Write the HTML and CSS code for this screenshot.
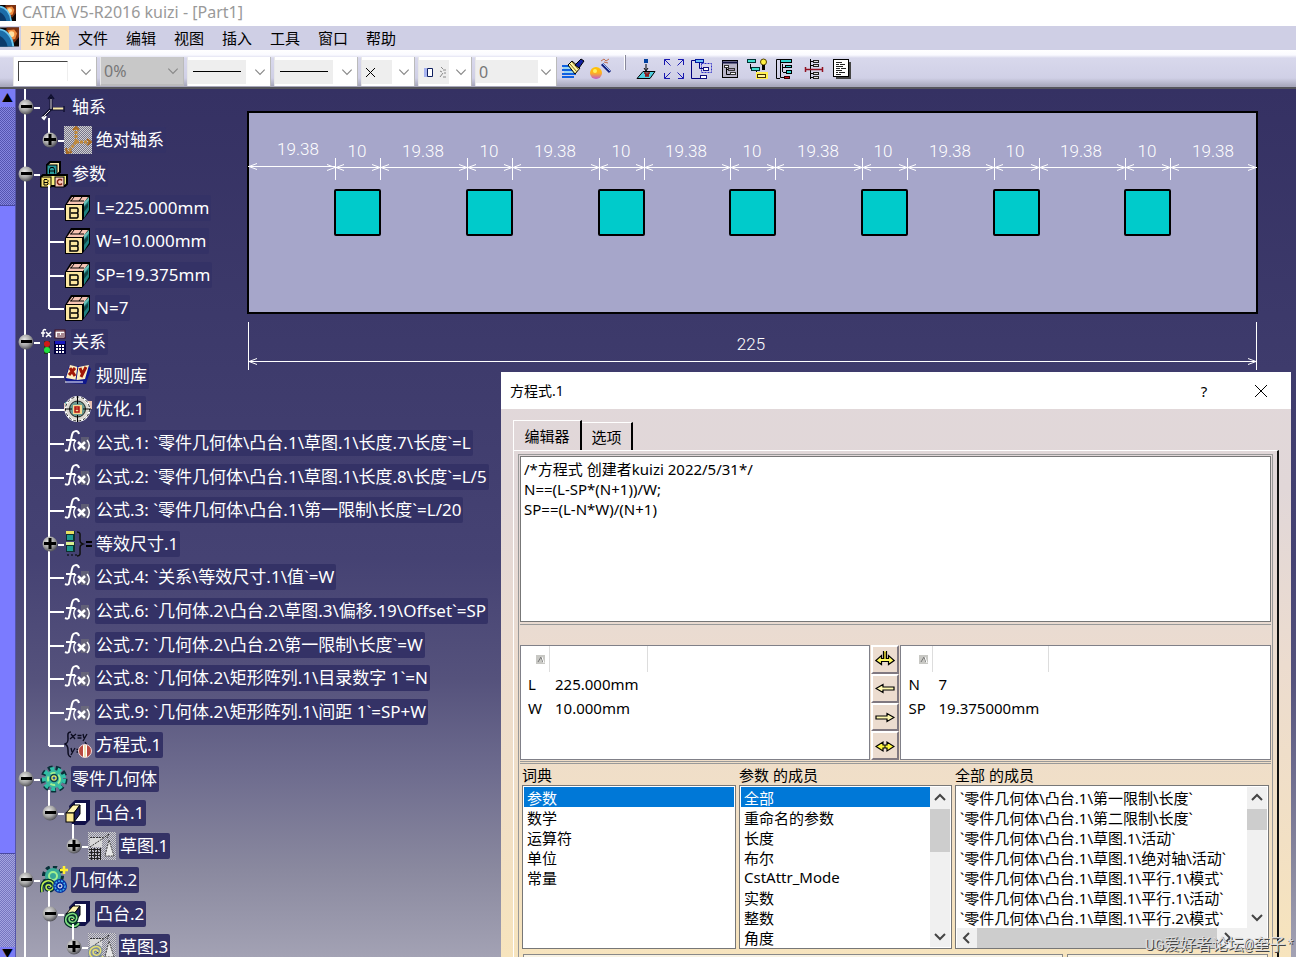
FILE: index.html
```html
<!DOCTYPE html>
<html lang="zh-CN">
<head>
<meta charset="utf-8">
<title>CATIA V5-R2016 kuizi - [Part1]</title>
<link rel="stylesheet" href="styles.css">
</head>
<body>
<svg class="defs" aria-hidden="true">
  <defs>
    <radialGradient id="ball" cx="40%" cy="35%" r="65%"><stop offset="0" stop-color="#e8e8e8"/><stop offset=".6" stop-color="#a4a4a4"/><stop offset="1" stop-color="#55555c"/></radialGradient>
    <pattern id="dither" width="2" height="2" patternUnits="userSpaceOnUse"><rect width="1" height="1" fill="#d0d0d0"/><rect x="1" y="1" width="1" height="1" fill="#d0d0d0"/></pattern>
    <linearGradient id="orb" x1="0" y1="0" x2="0" y2="1"><stop offset="0" stop-color="#ffc400"/><stop offset=".5" stop-color="#ffb020"/><stop offset="1" stop-color="#c05ad0"/></linearGradient>
  </defs>
  <symbol id="minus" viewBox="0 0 16 16"><circle cx="8" cy="8" r="7.5" fill="url(#ball)"/><path d="M3 7.5h11" stroke="#000" stroke-width="3"/></symbol>
  <symbol id="plus" viewBox="0 0 16 16"><circle cx="8" cy="8" r="7.5" fill="url(#ball)"/><path d="M2 7.5h12M8 2v11" stroke="#000" stroke-width="3"/></symbol>
  <symbol id="app" viewBox="0 0 20 20"><rect width="20" height="20" fill="#0a0505"/><path d="M7 0h13v10l-5 6-9-9z" fill="#7a3010"/><path d="M8 3l7-1 3 4-2 6-4 1z" fill="#f08a3c"/><circle cx="12" cy="7" r="3" fill="#ffe0a0"/><path d="M0 2c7 1 13 8 14 18H0z" fill="#1c6ca8"/><path d="M0 2c7 1 13 8 14 18" fill="none" stroke="#6cc8f0" stroke-width="2"/><path d="M0 9c4 2 7 6 8 11H0z" fill="#0c3a6a"/></symbol>
  <symbol id="axis" viewBox="0 0 28 28"><path d="M11 16V4M11 16h12M11 16l-8 8" stroke="#10102c" stroke-width="3" fill="none"/><path d="M13 15.500h11" stroke="#f8e8a8" stroke-width="2"/><path d="M11 16V6M10 17l-7 7" stroke="#e0d8e0" fill="none"/><path d="M8 6l3-4 3 4M24 13v6" stroke="#101030" stroke-width="1.500" fill="none"/><path d="M2 24l2 2 2-3" stroke="#fff" stroke-width="2" fill="none"/></symbol>
  <symbol id="axisdim" viewBox="0 0 28 28"><rect width="28" height="28" fill="#77758c"/><rect width="28" height="28" fill="url(#dither)"/><path d="M12 16V2M12 16h13M12 16L4 26" stroke="#c08a3c" stroke-width="3" fill="none" stroke-dasharray="3 1"/><path d="M9 4l3-3 3 3M23 13l4 3-4 3M2 22l1 5 5-1" stroke="#a86a20" stroke-width="2" fill="none"/></symbol>
  <symbol id="abc" viewBox="0 0 28 28"><path d="M7 5l3-3h10v10l-2 2H7z" fill="#f8e8a8" stroke="#000" stroke-width="2"/><rect x="7" y="5" width="10" height="10" fill="#2a9a9a" stroke="#000"/><path d="M9.500 13.500v-4l1-2h3l1 2v4M9.500 11h5" fill="none" stroke="#000"/><path d="M1 17l2-2h24v9l-2 2H1z" fill="#f8f080" stroke="#000" stroke-width="2"/><rect x="1" y="17" width="10" height="10" fill="#f8e070" stroke="#000"/><rect x="15" y="17" width="9" height="10" fill="#f8c8b8" stroke="#000"/><path d="M4 19.500h3l1 1v1l-1 1H4M7 22l1 1v1l-1 1H4v-5" fill="none" stroke="#000"/><path d="M22 20.500l-1-1h-2l-1.500 1.500v2l1.500 1.500h2l1-1" fill="none" stroke="#802010" stroke-width="1.500"/></symbol>
  <symbol id="cube" viewBox="0 0 28 28"><path d="M1 11L7 1h19v16l-8 10H1z" fill="#000"/><path d="M3 10l5-7h16l-5 7z" fill="#f6c4b4"/><path d="M6 7h14M10 3l-3 4M18 3l-3 4" stroke="#000"/><path d="M20 10l5-6v12l-5 8z" fill="#1f8080"/><path d="M20 13l4-4v4l-4 5z" fill="#000" opacity=".45"/><path d="M20 8l5-5v3l-5 6z" fill="#6ac0b8"/><rect x="2" y="11" width="16" height="15" fill="#fbe6a0"/><path d="M6 14h7l1 1v3l-1 1 1 1v3l-1 1H6zM7 19h6" fill="none" stroke="#000" stroke-width="1.5"/></symbol>
  <symbol id="rel" viewBox="0 0 28 28"><path d="M6 2c-2-1-3 0-3 2v5M1 5h4M6 4l5 5M11 4L6 9" fill="none" stroke="#fff" stroke-width="1.500"/><rect x="15" y="2" width="10" height="8" fill="#fff" stroke="#401020"/><path d="M15 3h10M17 6h3M21 6h3M17 8h7" stroke="#501020"/><rect x="4" y="13" width="6" height="13" fill="#203a20"/><circle cx="7" cy="16" r="3" fill="#d01818"/><circle cx="7" cy="22" r="3" fill="#20e040"/><rect x="14" y="13" width="12" height="13" fill="#000040"/><rect x="15" y="13" width="10" height="3" fill="#1818c0"/><path d="M16 18h9M16 21h9M16 24h9" stroke="#fff" stroke-width="2" stroke-dasharray="2 1"/></symbol>
  <symbol id="rules" viewBox="0 0 28 28"><path d="M1 17L5 4h20l2 3-5 15-19-1z" fill="#10188c"/><path d="M2 16L6 3l8 2 11-2-4 14-8 1z" fill="#fff0c0"/><path d="M14 4l-2 14" stroke="#10188c"/><path d="M6 6l5 8M11 6l-6 7M16 6l2 5M22 5l-5 10" stroke="#a01808" stroke-width="3"/><path d="M1 20h18" stroke="#fff"/></symbol>
  <symbol id="optim" viewBox="0 0 28 28"><path d="M0 8h8v8H0zM20 6h8v8h-8z" fill="#e8c0b0"/><path d="M1 7h6v6H1z" fill="#50a8a0"/><circle cx="13.500" cy="14" r="12" fill="#dcd8d0" stroke="#fff" stroke-width="2"/><circle cx="13.500" cy="14" r="12" fill="none" stroke="#222" stroke-dasharray="3 2"/><circle cx="13.500" cy="14" r="8" fill="#6a9a90" stroke="#222"/><rect x="9" y="10" width="9" height="9" fill="#f8d890"/><path d="M11 12h4v2h-4zM11 14h4v3h-4z" fill="none" stroke="#b01010" stroke-width="1.500"/><path d="M13.500 1v8M13.500 20v7M1 14h7M19 14h8" stroke="#000"/></symbol>
  <symbol id="fx" viewBox="0 0 28 28"><path d="M17 8h8v14h-8z" fill="#777" opacity=".5"/><path d="M15 5c-1-4-6-4-7 1L5 20c0 2-2 2-4 1M2 11h9" fill="none" stroke="#fff" stroke-width="2"/><path d="M12 11c-3 3-3 8 0 11M23 11c3 3 3 8 0 11" fill="none" stroke="#fff" stroke-width="1.500"/><path d="M14 13l7 7M21 13l-7 7" stroke="#fff" stroke-width="2.500"/></symbol>
  <symbol id="equiv" viewBox="0 0 28 28"><rect x="2" y="1" width="9" height="10" fill="#103030"/><rect x="2" y="1" width="8" height="3" fill="#e8e060"/><rect x="3" y="5" width="6" height="5" fill="#209890"/><rect x="2" y="12" width="9" height="10" fill="#103030"/><rect x="2" y="12" width="8" height="3" fill="#d8f090"/><rect x="3" y="16" width="6" height="5" fill="#209890"/><path d="M3 25h2M7 25h2M11 25h2" stroke="#000"/><path d="M13 2c4 0 3 3 3 6 0 4 0 5 3 6-3 1-3 2-3 6 0 3 1 6-3 6" fill="none" stroke="#111" stroke-width="1.500"/><path d="M22 12h6M22 16h6" stroke="#000" stroke-width="2"/></symbol>
  <symbol id="eqn" viewBox="0 0 28 28"><path d="M7 1c-4 0-3 3-3 7s-1 4-3 5c2 1 3 2 3 6s0 6 3 7" fill="none" stroke="#0c0c20" stroke-width="1.500"/><path d="M7 3l4 5M12 3L6 8M13.500 4.500h4M13.500 7h4M19 3l1 4M23 3l-4 7M7 17l1 4M11 17l-4 7M12.500 18.500h3M12.500 21h3M21 11l2 3" fill="none" stroke="#0c0c20" stroke-width="1.300"/><circle cx="21" cy="20" r="6.500" fill="#b84840"/><path d="M19 14h4v12h-4z" fill="#fff"/><path d="M21 14v12" stroke="#e0c060"/><circle cx="21" cy="20" r="6.500" fill="none" stroke="#f0d8d8"/></symbol>
  <symbol id="gear" viewBox="0 0 28 28"><circle cx="14" cy="14" r="11" fill="none" stroke="#083038" stroke-width="5" stroke-dasharray="4.600 3"/><circle cx="14" cy="14" r="10" fill="none" stroke="#30c0a8" stroke-width="4" stroke-dasharray="4 3.200"/><circle cx="14" cy="14" r="9" fill="#38b8a0"/><circle cx="14" cy="14" r="6" fill="none" stroke="#a0f090" stroke-width="2" stroke-dasharray="5 3"/><circle cx="14" cy="13" r="3.500" fill="#e8f060" stroke="#0c4050" stroke-width="1.500"/><circle cx="14" cy="13" r="1.500" fill="#2858a0"/></symbol>
  <symbol id="body2" viewBox="0 0 28 28"><circle cx="13" cy="10" r="9" fill="none" stroke="#083038" stroke-width="4" stroke-dasharray="4 3"/><circle cx="13" cy="10" r="8" fill="#38a898"/><circle cx="13" cy="10" r="4" fill="none" stroke="#a0f090" stroke-width="2"/><path d="M11 21c0-3-5-3-5 0s5 5 7 1-1-8-6-7-6 6-5 11" fill="none" stroke="#063038" stroke-width="4"/><path d="M11 21c0-3-5-3-5 0s5 5 7 1-1-8-6-7-6 6-5 11" fill="none" stroke="#c0f050" stroke-width="1.500"/><circle cx="20" cy="20" r="7" fill="#0830a0"/><circle cx="20" cy="20" r="5" fill="none" stroke="#40b0f0" stroke-width="1.500" stroke-dasharray="2 1"/><circle cx="20" cy="20" r="2" fill="none" stroke="#fff"/><path d="M24 0v8M20 4h8" stroke="#fff030" stroke-width="2.500"/></symbol>
  <symbol id="pad" viewBox="0 0 28 28"><path d="M5 7l6-6h15v20l-5 5H8z" fill="#101048"/><path d="M11 4h11v18H10z" fill="#fff"/><path d="M2 14l7-8h7l-6 8z" fill="#fff4b0" stroke="#000"/><path d="M16 6v9l-6 8v-9z" fill="#202060" stroke="#000"/><rect x="2" y="14" width="8" height="9" fill="#fbe890" stroke="#000"/></symbol>
  <symbol id="pad2" viewBox="0 0 28 28"><use href="#pad" width="28" height="28"/><path d="M10 19c0-3-5-3-5 0s5 5 7 1-1-8-6-6-6 8-1 11 8 1 10-2" fill="none" stroke="#063028" stroke-width="4"/><path d="M10 19c0-3-5-3-5 0s5 5 7 1-1-8-6-6-6 8-1 11 8 1 10-2" fill="none" stroke="#80e080" stroke-width="1.500"/></symbol>
  <symbol id="sketch" viewBox="0 0 28 28"><rect width="28" height="28" fill="#85849a"/><rect width="28" height="28" fill="url(#dither)"/><path d="M2 6h12v9H2z" fill="#d8d8d8"/><path d="M1 17.500h12M1 20.500h12M1 23.500h12M1 26.500h12M3.500 16v12M6.500 16v12M9.500 16v12M12.500 16v12" stroke="#222"/><path d="M2 5.500h13M2 15l12-8 7-5M21 2l-2 4" fill="none" stroke="#333" stroke-dasharray="2 1"/><path d="M21 8l5 16h-9z" fill="#e8e8e8" stroke="#444" stroke-dasharray="2 1"/></symbol>
  <symbol id="sketch2" viewBox="0 0 28 28"><use href="#sketch" width="28" height="28"/><path d="M10 19c0-3-5-3-5 0s5 5 7 1-1-8-6-6-6 8-1 11 8 1 10-2" fill="none" stroke="#8090a0" stroke-width="4"/><path d="M10 19c0-3-5-3-5 0s5 5 7 1-1-8-6-6-6 8-1 11 8 1 10-2" fill="none" stroke="#e8e070" stroke-width="1.500"/></symbol>
  <symbol id="chev" viewBox="0 0 12 12"><path d="M2 4l4 4 4-4" fill="none" stroke="currentColor"/></symbol>
  <symbol id="unit" viewBox="0 0 46 80" overflow="visible"><path d="M.5 1v22M45.500 1v22M1 10.500h44M9 7.500l-8 3 8 3M37 7.500l8 3-8 3M-8 7.500l8 3-8 3M54 7.500l-8 3 8 3" fill="none" stroke="#fff"/><rect x="0" y="33" width="45" height="45" rx="1" fill="#00cbcb" stroke="#000" stroke-width="2"/></symbol>
</svg>

<header class="titlebar"><svg class="app-icon"><use href="#app"/></svg><h1>CATIA V5-R2016 kuizi - [Part1]</h1></header>
<nav class="menubar"><svg class="doc-icon"><use href="#app"/></svg>
  <button class="active">开始</button><button>文件</button><button>编辑</button><button>视图</button><button>插入</button><button>工具</button><button>窗口</button><button>帮助</button>
</nav>

<div class="toolbar">
  <button class="combo" aria-label="填充颜色"><span class="swatch"></span><svg class="chev"><use href="#chev"/></svg></button>
  <label class="combo pct"><select aria-label="透明度"><option>0%</option></select><svg class="chev"><use href="#chev"/></svg></label>
  <button class="combo" aria-label="线宽"><span class="field"><i class="stroke"></i></span><svg class="chev"><use href="#chev"/></svg></button>
  <button class="combo" aria-label="线型"><span class="field"><i class="stroke"></i></span><svg class="chev"><use href="#chev"/></svg></button>
  <button class="combo small" aria-label="点符号"><span class="field"><svg class="glyph" viewBox="0 0 14 14"><path d="M2 3l9 9M11 3l-9 9" stroke="#000"/></svg></span><svg class="chev"><use href="#chev"/></svg></button>
  <button class="combo small" aria-label="渲染样式"><span class="field"><svg class="glyph wide" viewBox="0 0 26 14"><path d="M3 3h3v9H3z" fill="#a8b4f0"/><path d="M6.500 3.500h5v8h-5z" fill="#fff" stroke="#102060"/><path d="M20 2l2 2M19 6l2 1M19 12l3-4M22 5h3M23 8h2M22 12h3" stroke="#888"/></svg></span><svg class="chev"><use href="#chev"/></svg></button>
  <label class="combo layer"><select aria-label="图层"><option>0</option></select><svg class="chev"><use href="#chev"/></svg></label>
  <button class="tool" aria-label="格式刷"><svg viewBox="0 0 24 24"><path d="M1 9h10M1 13h12M1 17h14M1 20h12" stroke="#1060e0" stroke-width="2"/><path d="M2 11h9M3 15h10" stroke="#60d8f8"/><path d="M7 8l4-4 8 7-5 6z" fill="#fff8a0" stroke="#000"/><path d="M9 7l7 8M11 5l7 8" stroke="#806020"/><path d="M14 8l6-6 3 2-5 7z" fill="#1020a0" stroke="#000"/></svg></button>
  <button class="tool" aria-label="向导"><svg viewBox="0 0 24 24"><circle cx="7" cy="16" r="6" fill="url(#orb)"/><circle cx="6" cy="14" r="2" fill="#fff060"/><path d="M13 7l8 8" stroke="#102080" stroke-width="3"/><path d="M13 6l8 8" stroke="#a0c0f0"/><path d="M12 4l3-2 2 2 3-2M15 5l4 1" stroke="#c07050" fill="none"/></svg></button>
  <span class="grip"></span>
  <button class="tool" aria-label="固定"><svg viewBox="0 0 24 24"><rect x="10" y="2" width="4" height="4" fill="#0040a0"/><path d="M12 7v6M10 11l2 3 2-3" stroke="#000" fill="none"/><path d="M3 21.500l6-7h12l-5 7z" fill="#50d0e0" stroke="#000"/><path d="M10 16h2v4M16 16h-2v4M11 18h4" stroke="#901010" stroke-width="1.500" fill="none"/></svg></button>
  <button class="tool" aria-label="全部适应"><svg viewBox="0 0 24 24"><path d="M2.500 8V2.500H8M2.500 2.500l6 6M16 2.500h5.500V8M21.500 2.500l-6 6M2.500 16v5.500H8M2.500 21.500l6-6M21.500 16v5.500H16M21.500 21.500l-6-6" fill="none" stroke="#1818b0"/></svg></button>
  <button class="tool" aria-label="展开树"><svg viewBox="0 0 24 24"><path d="M6 3.500H1.500v18H10" fill="none" stroke="#000080"/><rect x="5.500" y="2.500" width="8" height="3" fill="#70c0f8" stroke="#0018a0"/><rect x="11.500" y="6.500" width="10" height="9" fill="none" stroke="#3030c8" stroke-dasharray="2 1"/><path d="M9.500 6v5.500H13" stroke="#000080" fill="none"/><rect x="13.500" y="10.500" width="5" height="3" fill="#fff" stroke="#101080"/><rect x="10.500" y="18.500" width="6" height="3" fill="#fff" stroke="#101080"/></svg></button>
  <button class="tool" aria-label="窗口树"><svg viewBox="0 0 24 24"><rect x="4.500" y="3.500" width="15" height="17" fill="#b8b4c8" stroke="#000"/><path d="M4 5.500h16" stroke="#101040" stroke-width="2"/><path d="M8.500 9v8.500H12M8 12.500h3" stroke="#000" fill="none"/><rect x="6.500" y="8.500" width="4" height="2" fill="#fff" stroke="#333"/><rect x="10.500" y="11.500" width="6" height="2" fill="#a898b0" stroke="#333"/><rect x="12.500" y="15.500" width="5" height="2" fill="#fff" stroke="#333"/></svg></button>
  <button class="tool" aria-label="重新排列"><svg viewBox="0 0 24 24"><path d="M4.500 7v4.500H8M10.500 14v4.500H14" stroke="#000" fill="none"/><rect x="1.500" y="2.500" width="8" height="3" fill="#40e0d0" stroke="#003030"/><rect x="5.500" y="10.500" width="8" height="3" fill="#40e0d0" stroke="#003030"/><path d="M10 15h12v7H10z" fill="#fff050"/><rect x="11.500" y="17.500" width="8" height="3" fill="#fff8a0" stroke="#403000"/><circle cx="17.500" cy="5" r="3" fill="#fff040" stroke="#504000"/><path d="M17.500 8v5" stroke="#000" stroke-width="3"/></svg></button>
  <button class="tool" aria-label="选择级别"><svg viewBox="0 0 24 24"><path d="M6 2.500H2.500v19H6M6.500 5v15.500H10M9 10.500h3M9 15.500h3M8.500 7v8" stroke="#000" fill="none"/><rect x="6.500" y="2.500" width="11" height="3" fill="#30d8d0" stroke="#000"/><rect x="11.500" y="8.500" width="6" height="2" fill="#30d8d0" stroke="#000"/><rect x="12.500" y="13.500" width="5" height="3" fill="#30d8d0" stroke="#000"/><rect x="10.500" y="19.500" width="5" height="2" fill="#d01020" stroke="#300"/></svg></button>
  <button class="tool" aria-label="切割"><svg viewBox="0 0 24 24"><path d="M8.500 2v20M8 4.500h4M8 8.500h4M8 16.500h4M8 20.500h4" stroke="#000"/><rect x="11.500" y="3.500" width="5" height="2" fill="#e0e0e0" stroke="#222"/><rect x="11.500" y="7.500" width="5" height="2" fill="#e0e0e0" stroke="#222"/><rect x="11.500" y="15.500" width="5" height="2" fill="#e0e0e0" stroke="#222"/><rect x="11.500" y="19.500" width="5" height="2" fill="#e0e0e0" stroke="#222"/><path d="M3 12.500h18M3.500 10v5M20.500 10v5" stroke="#901020" stroke-width="1.500"/></svg></button>
  <button class="tool" aria-label="报告"><svg viewBox="0 0 24 24"><rect x="6" y="5" width="15" height="17" fill="#444"/><rect x="3.500" y="2.500" width="15" height="17" fill="#fff" stroke="#000"/><path d="M6 5.500h6M6 7.500h3M10 7.500h5M6 9.500h7M6 11.500h4M11 11.500h5M6 13.500h6M6 15.500h2M9 15.500h6M6 17.500h5" stroke="#222"/></svg></button>
</div>

<main class="viewport">
  <div class="vscroll"><button aria-label="上">▲</button><i class="dither a"></i><i class="thumb"></i><i class="dither b"></i><button aria-label="下">▼</button></div>

  <svg class="drawing" viewBox="0 0 1012 262" width="1012" height="262">
    <rect x="2" y="2" width="1009" height="201" fill="#a6a6ca" stroke="#000" stroke-width="2"/>
    <use href="#unit" x="89" y="47" width="46" height="80"/><use href="#unit" x="221" y="47" width="46" height="80"/><use href="#unit" x="353" y="47" width="46" height="80"/><use href="#unit" x="484" y="47" width="46" height="80"/><use href="#unit" x="616" y="47" width="46" height="80"/><use href="#unit" x="748" y="47" width="46" height="80"/><use href="#unit" x="879" y="47" width="46" height="80"/>
    <path d="M2 56.500h87M11 53.500l-8 3 8 3M135 57.500h86M267 57.500h86M399 57.500h85M530 57.500h86M662 57.500h86M794 57.500h85M925 57.500h86M1002 54.500l8 3-8 3M2.500 212v48M1010.500 212v48M2 251.500h1008M11 248.500l-8 3 8 3M1002 248.500l8 3-8 3" fill="none" stroke="#fff"/>
    <g class="dims">
      <text x="52" y="45">19.38</text><text x="111" y="47">10</text><text x="177" y="47">19.38</text><text x="243" y="47">10</text><text x="309" y="47">19.38</text><text x="375" y="47">10</text><text x="440" y="47">19.38</text><text x="506" y="47">10</text><text x="572" y="47">19.38</text><text x="637" y="47">10</text><text x="704" y="47">19.38</text><text x="769" y="47">10</text><text x="835" y="47">19.38</text><text x="901" y="47">10</text><text x="967" y="47">19.38</text><text x="505" y="240">225</text>
    </g>
  </svg>

  <ul class="tree">
    <li class="row"><svg class="tog"><use href="#minus"/></svg><svg class="icon"><use href="#axis"/></svg><span>轴系</span></li>
    <li class="row l1 last"><svg class="tog"><use href="#plus"/></svg><svg class="icon"><use href="#axisdim"/></svg><span>绝对轴系</span></li>
    <li class="row"><svg class="tog"><use href="#minus"/></svg><svg class="icon"><use href="#abc"/></svg><span>参数</span></li>
    <li class="row l1 leaf"><svg class="icon"><use href="#cube"/></svg><span>L=225.000mm</span></li>
    <li class="row l1 leaf"><svg class="icon"><use href="#cube"/></svg><span>W=10.000mm</span></li>
    <li class="row l1 leaf"><svg class="icon"><use href="#cube"/></svg><span>SP=19.375mm</span></li>
    <li class="row l1 leaf last"><svg class="icon"><use href="#cube"/></svg><span>N=7</span></li>
    <li class="row"><svg class="tog"><use href="#minus"/></svg><svg class="icon"><use href="#rel"/></svg><span>关系</span></li>
    <li class="row l1 leaf"><svg class="icon"><use href="#rules"/></svg><span>规则库</span></li>
    <li class="row l1 leaf"><svg class="icon"><use href="#optim"/></svg><span>优化.1</span></li>
    <li class="row l1 leaf"><svg class="icon"><use href="#fx"/></svg><span>公式.1: `零件几何体\凸台.1\草图.1\长度.7\长度`=L</span></li>
    <li class="row l1 leaf"><svg class="icon"><use href="#fx"/></svg><span>公式.2: `零件几何体\凸台.1\草图.1\长度.8\长度`=L/5</span></li>
    <li class="row l1 leaf"><svg class="icon"><use href="#fx"/></svg><span>公式.3: `零件几何体\凸台.1\第一限制\长度`=L/20</span></li>
    <li class="row l1"><svg class="tog"><use href="#plus"/></svg><svg class="icon"><use href="#equiv"/></svg><span>等效尺寸.1</span></li>
    <li class="row l1 leaf"><svg class="icon"><use href="#fx"/></svg><span>公式.4: `关系\等效尺寸.1\值`=W</span></li>
    <li class="row l1 leaf"><svg class="icon"><use href="#fx"/></svg><span>公式.6: `几何体.2\凸台.2\草图.3\偏移.19\Offset`=SP</span></li>
    <li class="row l1 leaf"><svg class="icon"><use href="#fx"/></svg><span>公式.7: `几何体.2\凸台.2\第一限制\长度`=W</span></li>
    <li class="row l1 leaf"><svg class="icon"><use href="#fx"/></svg><span>公式.8: `几何体.2\矩形阵列.1\目录数字 1`=N</span></li>
    <li class="row l1 leaf"><svg class="icon"><use href="#fx"/></svg><span>公式.9: `几何体.2\矩形阵列.1\间距 1`=SP+W</span></li>
    <li class="row l1 leaf last"><svg class="icon"><use href="#eqn"/></svg><span>方程式.1</span></li>
    <li class="row"><svg class="tog"><use href="#minus"/></svg><svg class="icon"><use href="#gear"/></svg><span>零件几何体</span></li>
    <li class="row l1 last"><svg class="tog"><use href="#minus"/></svg><svg class="icon"><use href="#pad"/></svg><span>凸台.1</span></li>
    <li class="row l2 last"><svg class="tog"><use href="#plus"/></svg><svg class="icon"><use href="#sketch"/></svg><span>草图.1</span></li>
    <li class="row"><svg class="tog"><use href="#minus"/></svg><svg class="icon"><use href="#body2"/></svg><span>几何体.2</span></li>
    <li class="row l1 long"><svg class="tog"><use href="#minus"/></svg><svg class="icon"><use href="#pad2"/></svg><span>凸台.2</span></li>
    <li class="row l2 last"><svg class="tog"><use href="#plus"/></svg><svg class="icon"><use href="#sketch2"/></svg><span>草图.3</span></li>
  </ul>

  <section class="dialog" role="dialog" aria-labelledby="dlg">
    <div class="dlg-title"><h2 id="dlg">方程式.1</h2><button aria-label="帮助">?</button><button aria-label="关闭"><svg viewBox="0 0 14 14" width="14" height="14"><path d="M1 1l12 12M13 1L1 13" stroke="#000"/></svg></button></div>
    <div class="tabs"><button class="on">编辑器</button><button>选项</button></div>
    <div class="panel"><div class="frame">
      <textarea aria-label="方程式" spellcheck="false">/*方程式 创建者kuizi 2022/5/31*/
N==(L-SP*(N+1))/W;
SP==(L-N*W)/(N+1)</textarea>
      <div class="io">
        <div class="box"><table>
          <thead><tr><th><svg viewBox="0 0 9 9" width="9" height="9"><rect width="9" height="9" fill="#c8c8c4"/><path d="M2 7l3-5M5 2l2 5" fill="none" stroke="#777"/><path d="M6 2l2 6" stroke="#fff"/></svg></th><th class="c2"></th></tr></thead>
          <tbody><tr><td>L</td><td>225.000mm</td></tr><tr><td>W</td><td>10.000mm</td></tr></tbody></table></div>
        <div class="moves">
          <button aria-label="分配"><svg viewBox="0 0 20 16"><path d="M8.500 0v7.500H6.500v-3L.8 9.500l5.700 4v-3h7v3l5.700-4-5.700-5v3h-2V0" fill="#fff860" stroke="#000" stroke-width="1.200"/><path d="M10 1v7" stroke="#807000"/></svg></button>
          <button aria-label="移到输入"><svg viewBox="0 0 20 16"><path d="M1 8.500l7-4v2.500h11v3H8v2.500z" fill="#fff8b0" stroke="#000" stroke-width="1.200"/></svg></button>
          <button aria-label="移到输出"><svg viewBox="0 0 20 16"><path d="M19 8.500l-7-4v2.500H1v3h11v2.500z" fill="#fff8b0" stroke="#000" stroke-width="1.200"/></svg></button>
          <button aria-label="交换"><svg viewBox="0 0 20 16"><path d="M1 8.500l7-4.500v3h4V4l7 4.500-7 4.500v-3H8v3z" fill="#fff840" stroke="#000" stroke-width="1.200"/><path d="M10 7v3" stroke="#000"/></svg></button>
        </div>
        <div class="box out"><table>
          <thead><tr><th><svg viewBox="0 0 9 9" width="9" height="9"><rect width="9" height="9" fill="#c8c8c4"/><path d="M2 7l3-5M5 2l2 5" fill="none" stroke="#777"/><path d="M6 2l2 6" stroke="#fff"/></svg></th><th class="c2"></th></tr></thead>
          <tbody><tr><td>N</td><td>7</td></tr><tr><td>SP</td><td>19.375000mm</td></tr></tbody></table></div>
      </div>
      <div class="dict">
        <div class="col"><label for="d1">词典</label><div class="list"><select id="d1" size="8"><option selected>参数</option><option>数学</option><option>运算符</option><option>单位</option><option>常量</option></select></div></div>
        <div class="col"><label for="d2">参数 的成员</label><div class="list"><select id="d2" size="8"><option selected>全部</option><option>重命名的参数</option><option>长度</option><option>布尔</option><option>CstAttr_Mode</option><option>实数</option><option>整数</option><option>角度</option></select>
          <div class="sb"><svg class="ar" viewBox="0 0 12 12"><path d="M1 8l5-5 5 5"/></svg><i class="tall"></i><svg class="ar end" viewBox="0 0 12 12"><path d="M1 4l5 5 5-5"/></svg></div></div></div>
        <div class="col"><label for="d3">全部 的成员</label><div class="list wide">
          <div class="inner"><select id="d3" size="7"><option>`零件几何体\凸台.1\第一限制\长度`</option><option>`零件几何体\凸台.1\第二限制\长度`</option><option>`零件几何体\凸台.1\草图.1\活动`</option><option>`零件几何体\凸台.1\草图.1\绝对轴\活动`</option><option>`零件几何体\凸台.1\草图.1\平行.1\模式`</option><option>`零件几何体\凸台.1\草图.1\平行.1\活动`</option><option>`零件几何体\凸台.1\草图.1\平行.2\模式`</option></select>
          <div class="sb"><svg class="ar" viewBox="0 0 12 12"><path d="M1 8l5-5 5 5"/></svg><i></i><svg class="ar end" viewBox="0 0 12 12"><path d="M1 4l5 5 5-5"/></svg></div></div>
          <div class="hb"><svg class="ar" viewBox="0 0 12 12"><path d="M8 1L3 6l5 5"/></svg><i></i><svg class="ar" viewBox="0 0 12 12"><path d="M4 1l5 5-5 5"/></svg></div></div></div>
      </div>
      <div class="foot"><i></i><i></i></div>
    </div></div>
  </section>
  <div class="watermark">UG爱好者论坛@奎子*</div>
</main>
</body>
</html>
```

FILE: styles.css
```css
* { box-sizing: border-box; }
body {
  margin: 0; height: 100vh; overflow: hidden;
  display: flex; flex-direction: column;
  font: 15px/20px "Noto Sans", "Noto Sans CJK SC", sans-serif; color: #000;
}
button, select, textarea { font: inherit; color: inherit; border: 0; padding: 0; margin: 0; background: none; border-radius: 0; outline: 0; }
h1, h2 { margin: 0; font-size: 15px; font-weight: 400; }
ul { list-style: none; margin: 0; padding: 0; }
.defs { position: absolute; width: 0; height: 0; }

.titlebar { display: flex; align-items: center; gap: 6px; height: 26px; flex: none; background: #fff; color: #999; }
.titlebar h1 { padding-bottom: 3px; font-size: 16px; }
.app-icon { width: 16px; height: 16px; }
.menubar { display: flex; height: 24px; flex: none; background: #cfcfe5; }
.doc-icon { width: 19px; height: 22px; margin-right: 2px; }
.menubar button { width: 48px; }
.menubar .active { background: #fbe3bd; }

.toolbar {
  display: flex; align-items: stretch; gap: 3px; height: 39px; flex: none;
  padding: 7px 0 1px 13px; border-bottom: 2px solid #55555c;
  background: linear-gradient(#fff 0, #fafaff 5px, #d8d8ec 8px, #d0d0e6 28px, #a8a8bc 36px);
}
.combo {
  position: relative; display: flex; align-items: center; width: 84px; height: 29px;
  background: #fff; border-right: 1px solid #bbb; border-left: 1px solid #e8e8e8; color: #888; font-size: 16px;
}
.combo .chev { width: 14px; height: 14px; margin-left: auto; margin-right: 3px; flex: none; }
.combo .swatch { width: 50px; height: 20px; margin: 0 0 1px 4px; border-left: 1px solid #444; border-top: 1px solid #444; border-right: 1px solid #eee; }
.combo .field { display: flex; align-items: center; justify-content: center; width: 58px; height: 24px; background: #eee; }
.combo .stroke { width: 48px; height: 1px; background: #000; }
.combo.small { width: 54px; }
.combo.small .field { width: 30px; justify-content: flex-start; padding-left: 2px; }
.glyph { width: 14px; height: 14px; }
.glyph.wide { width: 26px; }
.combo select { appearance: none; width: 62px; height: 23px; padding-left: 3px; background: #eee; color: #777; }
.combo.layer { width: 82px; }
.combo.pct, .combo.pct select { background: #c8c8c8; }
.combo.pct { border-bottom: 2px solid #bbb; }
.tool { width: 25px; display: flex; align-items: flex-start; justify-content: center; }
.tool svg { width: 24px; height: 24px; }
.grip { width: 2px; height: 15px; margin: -2px 4px 0 8px; background: #88889c; border-left: 1px solid #fff; }

.viewport {
  position: relative; flex: 1; display: flex; min-height: 0; overflow: hidden;
  background: linear-gradient(#353163 0, #3c396a 26%, #454273 54%, #55527c 68%, #6c6a8d 78%, #8a899f 90%, #a3a2b4 100%);
}
.vscroll { display: flex; flex-direction: column; width: 16px; border-right: 1px solid #5555a8; background: #7a7aff; }
.vscroll button { height: 18px; font-size: 11px; line-height: 18px; background: #7b7bf4; color: #000; }
.vscroll .dither { background: repeating-conic-gradient(#5454b0 0 25%, #8686e0 0 50%) 0 0 / 2px 2px; }
.vscroll .a { height: 98px; }
.vscroll .b { height: 93px; background: repeating-conic-gradient(#7676c0 0 25%, #a4a4e0 0 50%) 0 0 / 2px 2px; }
.vscroll button:last-child { height: 10px; line-height: 14px; overflow: hidden; }
.vscroll .thumb { flex: 1; border: 1px solid #4848a0; border-width: 1px 0; background: #7b7bff; }

.tree {
  display: grid; grid-auto-rows: 1fr; height: calc(100% + 7px); padding: 1px 0 0 2px;
  color: #fff; font-size: 17px; line-height: 26px;
  background: linear-gradient(#fff, #fff) 8px 0 / 2px 100% no-repeat;
}
.row { position: relative; display: flex; align-items: center; gap: 3px; white-space: nowrap; }
.row.l1 { padding-left: 24px; }
.row.l2 { padding-left: 48px; }
.row::before { content: ""; position: absolute; left: 30px; top: -6px; bottom: 0; width: 2px; background: #fff; display: none; }
.row.l1::before, .row.l2::before { display: block; }
.row.l2::before { left: 54px; }
.row.last::before { bottom: 50%; }
.row.long::before { bottom: -34px; }
.row::after { content: ""; position: absolute; left: 16px; top: 50%; height: 2px; width: 6px; background: #fff; }
.row.l1::after { left: 40px; }
.row.l2::after { left: 64px; }
.row.leaf::after { left: 31px; width: 15px; }
.tog { position: relative; z-index: 1; width: 16px; height: 16px; margin-right: 3px; }
.leaf .icon { margin-left: 22px; }
.icon { width: 28px; height: 28px; }
.row span { padding: 0 2px 0 1px; background: #343266; border-radius: 2px; }

.drawing { position: absolute; left: 246px; top: 21px; }
.dims { fill: #fff; font-family: "Liberation Sans Narrow", Roboto, sans-serif; font-weight: 300; font-size: 17px; text-anchor: middle; }

.dialog {
  position: absolute; left: 501px; right: 5px; top: 283px; bottom: 0; overflow: hidden;
  display: flex; flex-direction: column;
  background: linear-gradient(#e1d8da 0, #e1d7d8 20%, #ecdccf 50%, #f2e0c4 80%, #f7e4bd 100%);
}
.dlg-title { display: flex; align-items: center; height: 37px; flex: none; padding: 0 8px 0 9px; background: #fff; }
.dlg-title h2 { flex: 1; font-size: 14px; }
.dlg-title button { width: 44px; margin-left: 13px; display: flex; justify-content: center; }
.tabs { display: flex; align-items: flex-end; height: 41px; flex: none; padding-left: 12px; }
.tabs button { width: 51px; height: 28px; border-top: 1px solid #fff; border-right: 2px solid #000; }
.tabs .on { width: 69px; height: 30px; border-left: 1px solid #fff; }
.panel { flex: 1; margin: 0 12px; padding: 3px 4px 0 4px; border: 1px solid #fff; border-bottom: 0; border-right: 2px solid #111; }
.frame { border: 1px solid #999; border-bottom: 0; display: flex; flex-direction: column; padding: 1px; }
textarea { display: block; width: 100%; height: 166px; padding: 2px 3px; border: 1px solid #777; background: #fff; resize: none; overflow: hidden; }
.io { display: grid; grid-template-columns: 350fr 30px 370fr; margin-top: 2px; padding: 20px 0 1px; border-top: 1px solid #999; border-bottom: 1px solid #999; }
.box { height: 115px; border: 1px solid #808088; background: #fff; }
table { border-collapse: collapse; }
th, td { padding: 0; height: 24px; text-align: left; font-weight: 400; }
th { height: 26px; text-align: right; vertical-align: middle; border-right: 1px solid #ddd; padding-right: 4px; line-height: 9px; }
td:first-child { width: 28px; padding-left: 7px; }
td + td { padding-left: 6px; }
.c2 { width: 98px; }
.out td:first-child { width: 31px; }
.out .c2 { width: 116px; }
.moves { display: grid; grid-template-rows: repeat(4, 1fr); padding: 0 1px; }
.moves button { display: flex; align-items: center; justify-content: center; background: #ecdccf; border: 2px solid; border-color: #fff #807880 #807880 #fff; }
.moves svg { width: 20px; height: 16px; flex: none; }
.dict { display: grid; grid-template-columns: 214fr 213fr 314fr; gap: 3px; margin-top: 1px; padding: 1px 2px 0; border-top: 1px solid #999; }
.col { min-width: 0; display: flex; flex-direction: column; }
.col label { height: 20px; }
.list { display: flex; height: 164px; padding: 1px; border: 1px solid #777; background: #fff; }
.list select { flex: 1; min-width: 0; height: 160px; overflow: hidden; background: #fff; scrollbar-width: none; }
.list option { padding: 0 3px; height: 20px; min-height: 20px; line-height: 20px; }
.list option:checked { background: #0078d7 linear-gradient(#0078d7, #0078d7); color: #fff; }
.list.wide { flex-direction: column; }
.inner { display: flex; }
.list.wide select { height: 141px; }
.sb { width: 20px; display: flex; flex-direction: column; align-items: center; background: #f0f0f0; }
.sb i { width: 100%; height: 21px; background: #cdcdcd; }
.sb .tall { height: 43px; }
.sb .end { margin-top: auto; }
.ar { width: 12px; height: 12px; margin: 5px 4px; fill: none; stroke: #444; stroke-width: 2; }
.hb { display: flex; height: 20px; align-items: stretch; background: #f0f0f0; }
.hb .ar { margin: 4px; }
.hb i { width: 240px; background: #cdcdcd; }
.foot { display: grid; grid-template-columns: 545fr 203fr; gap: 4px; padding: 5px 3px 0; }
.foot i { height: 20px; border: 1px solid #888; background: #f7f2e4; }

.watermark { position: absolute; right: 1px; bottom: 1px; font: 16px/20px "Liberation Mono", "Noto Sans CJK SC", monospace; color: #ddd; text-shadow: 1px 1px #444; }
```
